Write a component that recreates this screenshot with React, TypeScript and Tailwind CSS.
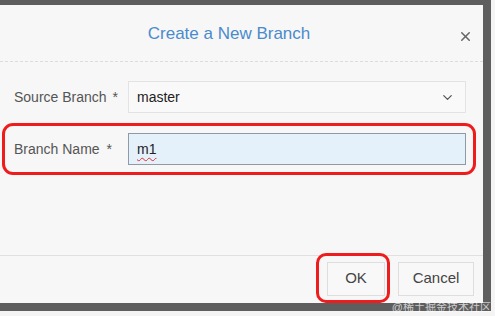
import { ChevronDown, X } from 'lucide-react'

export default function App() {
  return (
    <div
      className="relative w-[495px] h-[316px] overflow-hidden bg-[#f4f4f4]"
      style={{ fontFamily: '"Liberation Sans", Arial, sans-serif' }}
    >
      {/* dark frame around the dialog */}
      <div className="flex flex-col w-[491px] h-[311px] bg-[#5e5e5e] pt-[5px] pr-[8px] pb-[8px]">
        <div className="relative flex flex-col flex-1 bg-[#f7f7f7]">
          {/* header */}
          <div className="flex items-center h-[57px] border-b border-dashed border-[#dcdcdc]">
            <div className="flex-1 text-center text-[17px] text-[#4a8bcc] pt-[2px]">
              Create a New Branch
            </div>
            <X className="w-[15px] h-[15px] text-[#666] mr-[10px] mt-[6px]" strokeWidth={2.4} />
          </div>

          {/* body */}
          <div className="flex flex-col flex-1 pt-[19px] pl-[14px] pr-[17px]">
            <div className="flex items-center h-[32px]">
              <label className="w-[114px] text-[14px] text-[#555]">
                Source Branch<span className="ml-[6px]">*</span>
              </label>
              <div className="flex items-center flex-1 h-[32px] border border-[#e3e3e3] bg-[#f9f9f9] pl-[8px] pr-[10px]">
                <span className="flex-1 text-[14px] text-[#222]">master</span>
                <ChevronDown className="w-[15px] h-[15px] text-[#555]" strokeWidth={2} />
              </div>
            </div>

            <div className="flex items-center h-[32px] mt-[20px]">
              <label className="w-[114px] text-[14px] text-[#555]">
                Branch Name<span className="ml-[7px]">*</span>
              </label>
              <div className="flex items-center flex-1 h-[32px] border border-[#8e9aa4] bg-[#e4f0fa] pl-[8px]">
                <span className="text-[14px] text-[#222] underline decoration-wavy decoration-[#e03030] decoration-1 underline-offset-[3px]">
                  m1
                </span>
              </div>
            </div>
          </div>

          {/* footer */}
          <div className="flex items-center justify-end gap-[13px] h-[48px] border-t border-[#e0e0e0] pr-[9px] pb-[2px]">
            <button className="w-[58px] h-[34px] border border-[#dedede] bg-[#f8f8f8] text-[15px] text-[#444]">
              OK
            </button>
            <button className="w-[76px] h-[34px] border border-[#dedede] bg-[#f8f8f8] text-[15px] text-[#444]">
              Cancel
            </button>
          </div>

          {/* red highlight marks */}
          <div className="absolute left-[2px] top-[118px] w-[474px] h-[52px] rounded-[11px] border-[3px] border-[#ee1c1c]" />
          <div className="absolute left-[316px] top-[248px] w-[74px] h-[50px] rounded-[10px] border-[3px] border-[#ee1c1c]" />
        </div>
      </div>

      {/* watermark */}
      <div
        className="absolute right-[4px] bottom-[1px] text-[11px] text-white/70"
        style={{ fontFamily: '"Liberation Sans", "Noto Sans CJK SC", sans-serif' }}
      >
        @稀土掘金技术社区
      </div>
    </div>
  )
}
